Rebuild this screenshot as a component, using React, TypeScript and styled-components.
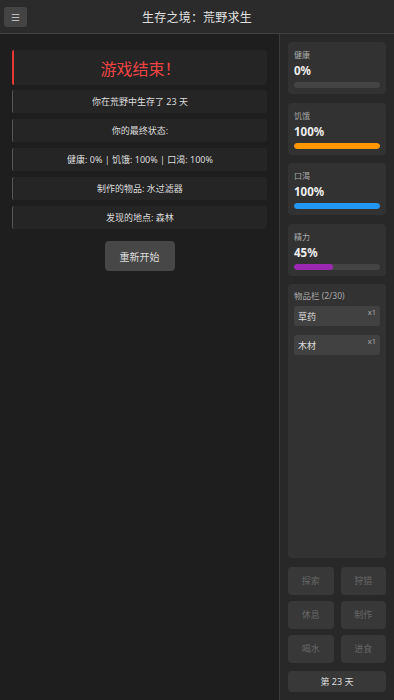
import React from 'react';
import styled, { createGlobalStyle } from 'styled-components';

const GlobalStyle = createGlobalStyle`
    html, body {
        margin: 0;
        padding: 0;
        height: 100%;
        background: #1e1e1e;
    }
    body {
        font-family: "Noto Sans", "Noto Sans CJK SC", sans-serif;
        color: #ddd;
    }
    #root { height: 100%; }
`

const Page = styled.div`
    display: flex;
    flex-direction: column;
    height: 100vh;
    overflow: hidden;
`

const Header = styled.header`
    height: 33px;
    flex-shrink: 0;
    background: #2b2b2b;
    border-bottom: 1px solid #404040;
    display: flex;
    align-items: center;
    justify-content: center;
    position: relative;
`

const MenuButton = styled.button`
    position: absolute;
    left: 4px;
    top: 7px;
    width: 23px;
    height: 20px;
    border: none;
    border-radius: 3px;
    background: #444;
    color: #bbb;
    font-size: 10px;
    padding: 0;
    display: grid;
    place-items: center;
`

const HeaderTitle = styled.h1`
    margin: 0;
    font-size: 12px;
    font-weight: 400;
    color: #e0e0e0;
    letter-spacing: 0.2px;
`

const Body = styled.div`
    flex: 1;
    display: flex;
    min-height: 0;
`

const Main = styled.main`
    flex: 1;
    background: #1e1e1e;
    padding: 16px 12px 0 12px;
    display: flex;
    flex-direction: column;
    align-items: stretch;
`

const OverTitle = styled.div`
    height: 35px;
    background: #252525;
    border-left: 2px solid #e53935;
    border-radius: 2px;
    display: grid;
    place-items: center;
    color: #ef4444;
    font-size: 16px;
    margin-bottom: 5px;
`

const InfoRow = styled.div`
    height: 23px;
    background: #252525;
    border-left: 1px solid #555;
    border-radius: 2px;
    display: grid;
    place-items: center;
    font-size: 9px;
    color: #ddd;
    margin-bottom: 6px;
`

const RestartButton = styled.button`
    align-self: center;
    margin-top: 6px;
    width: 70px;
    height: 30px;
    border: none;
    border-radius: 4px;
    background: #474747;
    color: #ddd;
    font-family: inherit;
    font-size: 10px;
`

const Sidebar = styled.aside`
    width: 115px;
    flex-shrink: 0;
    background: #282828;
    border-left: 1px solid #3a3a3a;
    box-sizing: border-box;
    padding: 8px;
    display: flex;
    flex-direction: column;
    gap: 8.5px;
`

const Card = styled.section`
    background: #323232;
    border-radius: 4px;
    padding: 7px 6px 6px;
    height: 52px;
    box-sizing: border-box;
`

const StatLabel = styled.div`
    font-size: 8px;
    color: #aaa;
    line-height: 11px;
`

const StatValue = styled.div`
    font-size: 11.5px;
    font-weight: 700;
    color: #eee;
    line-height: 16px;
    margin-top: 3px;
`

const Track = styled.div`
    height: 6px;
    border-radius: 3px;
    background: #444;
    margin-top: 3px;
    overflow: hidden;
`

const Fill = styled.div<{ $color: string }>`
    height: 100%;
    border-radius: 3px;
    background: ${(p) => p.$color};
`

const Inventory = styled.section`
    flex: 1;
    background: #323232;
    border-radius: 4px;
    padding: 6px 6px;
    display: flex;
    flex-direction: column;
    gap: 9px;
`

const InvTitle = styled.div`
    font-size: 8.5px;
    color: #aaa;
    line-height: 11px;
    margin-bottom: -4px;
`

const Item = styled.div`
    height: 20px;
    background: #414141;
    border-radius: 3px;
    position: relative;
    display: flex;
    align-items: center;
    padding-left: 4px;
    font-size: 9px;
    color: #ddd;
`

const ItemCount = styled.span`
    position: absolute;
    right: 4px;
    top: 2px;
    font-size: 7.5px;
    color: #aaa;
    line-height: 9px;
`

const Actions = styled.div`
    display: grid;
    grid-template-columns: 1fr 1fr;
    gap: 6px 7px;
`

const ActionButton = styled.button`
    height: 28px;
    border: none;
    border-radius: 4px;
    background: #383838;
    color: #666;
    font-family: inherit;
    font-size: 9px;
    padding: 0;
`

const DayBox = styled.div`
    height: 21px;
    background: #383838;
    border-radius: 4px;
    display: grid;
    place-items: center;
    font-size: 9px;
    color: #ddd;
`

const stats = [
    { label: '健康', value: 0, color: '#4caf50' },
    { label: '饥饿', value: 100, color: '#ff9800' },
    { label: '口渴', value: 100, color: '#2196f3' },
    { label: '精力', value: 45, color: '#9c27b0' },
]

const rows = [
    '你在荒野中生存了 23 天',
    '你的最终状态:',
    '健康: 0% | 饥饿: 100% | 口渴: 100%',
    '制作的物品: 水过滤器',
    '发现的地点: 森林',
]

const items = [
    { name: '草药', count: 1 },
    { name: '木材', count: 1 },
]

const actions = ['探索', '狩猎', '休息', '制作', '喝水', '进食']

const App: React.FC = () => {
    return <>
        <GlobalStyle />
        <Page>
            <Header>
                <MenuButton>☰</MenuButton>
                <HeaderTitle>生存之境：荒野求生</HeaderTitle>
            </Header>
            <Body>
                <Main>
                    <OverTitle>游戏结束！</OverTitle>
                    {rows.map((r) => <InfoRow key={r}>{r}</InfoRow>)}
                    <RestartButton>重新开始</RestartButton>
                </Main>
                <Sidebar>
                    {stats.map((s) => (
                        <Card key={s.label}>
                            <StatLabel>{s.label}</StatLabel>
                            <StatValue>{s.value}%</StatValue>
                            <Track>
                                <Fill $color={s.color} style={{ width: `${s.value}%` }} />
                            </Track>
                        </Card>
                    ))}
                    <Inventory>
                        <InvTitle>物品栏 (2/30)</InvTitle>
                        {items.map((it) => (
                            <Item key={it.name}>
                                {it.name}
                                <ItemCount>x{it.count}</ItemCount>
                            </Item>
                        ))}
                    </Inventory>
                    <Actions>
                        {actions.map((a) => <ActionButton key={a} disabled>{a}</ActionButton>)}
                    </Actions>
                    <DayBox>第 23 天</DayBox>
                </Sidebar>
            </Body>
        </Page>
    </>
}

export default App;
